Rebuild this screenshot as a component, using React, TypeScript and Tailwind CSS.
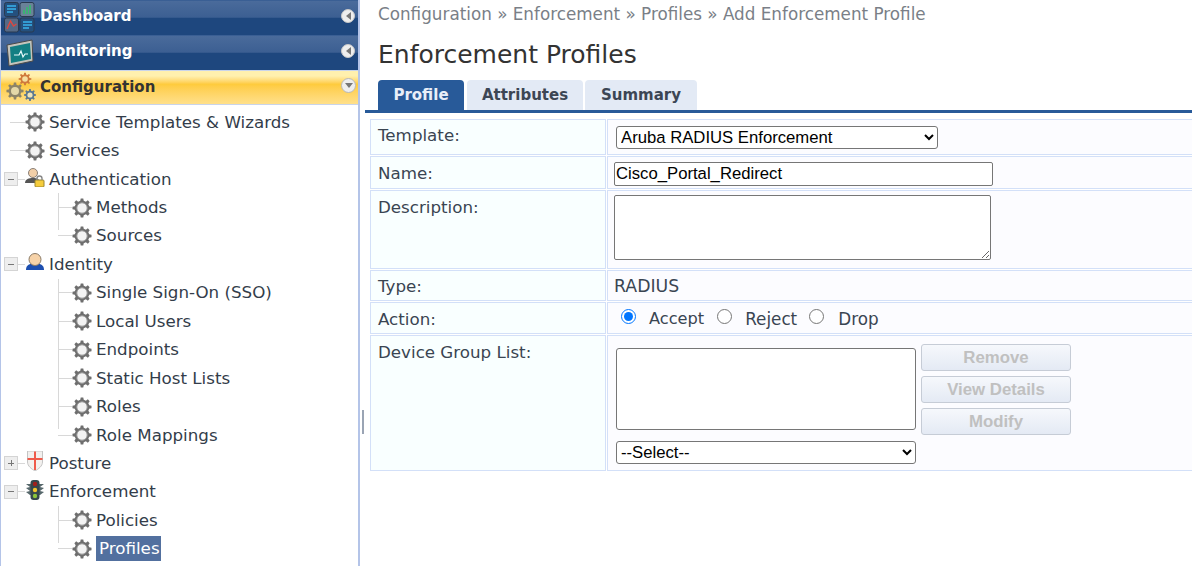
const sans = { fontFamily: '"DejaVu Sans", sans-serif' };

// outline of a toothed wheel, used by all the gear icons
const gearPath = (cx: number, cy: number, inner: number, outer: number, teeth = 8) => {
  const pts: string[] = [];
  for (let i = 0; i < teeth; i++) {
    const step = (Math.PI * 2) / teeth;
    const a = i * step;
    [
      [a - step * 0.3, inner],
      [a - step * 0.17, outer],
      [a + step * 0.17, outer],
      [a + step * 0.3, inner],
    ].forEach(([ang, r]) => {
      pts.push(`${(cx + Math.cos(ang) * r).toFixed(2)} ${(cy + Math.sin(ang) * r).toFixed(2)}`);
    });
  }
  return `M${pts.join("L")}Z`;
};

const Gear = () => (
  <svg width="20" height="20" viewBox="0 0 20 20" className="shrink-0">
    <path fill="#6e6e6e" d={gearPath(10, 10, 7.4, 9.6)} />
    <circle cx="10" cy="10" r="5.2" fill="#f3f3f3" stroke="#9c9c9c" strokeWidth="1" />
  </svg>
);

const Toggle = ({ plus }: { plus?: boolean }) => (
  <span className="relative flex h-[14px] w-[14px] shrink-0 items-center justify-center border border-[#d4d4d4] bg-[#eeeeee]">
    <span className="h-px w-[6px] bg-[#777777]" />
    {plus && <span className="absolute h-[6px] w-px bg-[#777777]" />}
  </span>
);

const AuthIcon = () => (
  <svg width="20" height="20" viewBox="0 0 20 20" className="shrink-0 -translate-y-[2px]">
    <circle cx="8" cy="6" r="4.500" fill="#f2cfa8" stroke="#8a8078" />
    <path d="M0 16c0-4 4-5 8-5s7 1 7 5z" fill="#555555" />
    <rect x="10" y="13" width="9" height="7" rx="1" fill="#f5cc3c" stroke="#9a8530" />
    <path d="M12 13v-1.500a2.500 2.500 0 0 1 5 0V13" fill="none" stroke="#888888" strokeWidth="1.400" />
  </svg>
);

const IdentityIcon = () => (
  <svg width="20" height="20" viewBox="0 0 20 20" className="shrink-0 -translate-y-[2px]">
    <path d="M1 18c0-4 2-5 4-6h10c2 1 4 2 4 6z" fill="#1d4fb0" />
    <circle cx="10" cy="7.500" r="6" fill="#f6d2a8" stroke="#8a7a66" />
  </svg>
);

const ShieldIcon = () => (
  <svg width="20" height="20" viewBox="0 0 20 20" className="shrink-0 -translate-y-[2px]">
    <path d="M2.500 0h15v11c0 4-4 7-7.500 9-3.500-2-7.500-5-7.500-9z" fill="#f2f0ee" stroke="#c4c4c4" />
    <path d="M9 .5h2V7h6.500v2H11v10H9V9H2.500V7H9z" fill="#ef5a4a" />
  </svg>
);

const LightIcon = () => (
  <svg width="20" height="20" viewBox="0 0 20 20" className="shrink-0 -translate-y-[2px]">
    <path d="M1 4h18l-4 3 4 1-4 3 4 1-4 3H5l-4-3 4-1-4-3 4-1z" fill="#56676b" />
    <rect x="5.500" y="0" width="9" height="20" rx="3" fill="#36474c" />
    <circle cx="10" cy="4" r="2.200" fill="#a3201c" />
    <circle cx="10" cy="10" r="2.200" fill="#f3c42c" />
    <circle cx="10" cy="16" r="2.200" fill="#8cc43c" />
  </svg>
);

const DashIcon = () => (
  <svg width="31" height="31" viewBox="0 0 31 31" className="absolute left-[3px] top-[1px]">
    <rect x=".5" y=".5" width="14" height="14" rx="2" fill="#24507e" stroke="#2a3a50" />
    <rect x="16" y=".5" width="14" height="14" rx="2" fill="#6a8298" stroke="#2a3a50" />
    <rect x=".5" y="16" width="14" height="14" rx="2" fill="#566a86" stroke="#2a3a50" />
    <rect x="16" y="16" width="14" height="14" rx="2" fill="#24507e" stroke="#2a3a50" />
    <path d="M3 4h9M3 7h9M3 10h6" stroke="#39b4ee" strokeWidth="1.500" />
    <path d="M20 12V8M23 12V5M26 12V3" stroke="#2fc06a" strokeWidth="1.500" />
    <path d="M3 27l3.500-8 3 5 3-2" stroke="#e2453c" strokeWidth="1.300" fill="none" />
    <path d="M19 20h9M19 23h9M19 26h6" stroke="#39b4ee" strokeWidth="1.500" />
  </svg>
);

const MonitorIcon = () => (
  <svg width="28" height="28" viewBox="0 0 28 28" className="absolute left-[5px] top-[3px]">
    <path d="M1 6l25-5 1 21L3 27z" fill="#c4c4bc" stroke="#4a4a4a" />
    <path d="M4 8l20-4 1 16L5 24z" fill="#127f83" />
    <path d="M8 16h5l2-4 2 6 2-3h3" stroke="#e8fbfb" strokeWidth="1.200" fill="none" />
  </svg>
);

const ConfigIcon = () => (
  <svg width="32" height="32" viewBox="0 0 32 32" className="absolute left-[3px] top-[1px]">
    <path fill="#d07a3c" d={gearPath(21, 7, 4.6, 6.4)} />
    <circle cx="21" cy="7" r="2.800" fill="#f6dfa0" />
    <path fill="#8c8468" d={gearPath(11, 19, 6.4, 8.6)} />
    <circle cx="11" cy="19" r="4" fill="#e4d8a8" />
    <path fill="#5c7890" d={gearPath(26, 23, 4.4, 6)} />
    <circle cx="26" cy="23" r="2.600" fill="#f0e4b8" />
  </svg>
);

const Arrow = ({ down }: { down?: boolean }) => (
  <span
    className={
      down
        ? "absolute right-[2px] top-[7px] flex h-[15px] w-[15px] items-center justify-center rounded-full border border-[#b8b8b8] bg-[#eeeeee]"
        : "absolute right-[3px] top-[8px] flex h-[14px] w-[14px] items-center justify-center rounded-full border border-[#c8c8c8] bg-[#eeeeee]"
    }
  >
    {down ? (
      <span className="h-0 w-0 border-x-[4px] border-t-[5px] border-x-transparent border-t-[#777777]" />
    ) : (
      <span className="h-0 w-0 border-y-[4px] border-r-[5px] border-y-transparent border-r-[#777777]" />
    )}
  </span>
);

const NavHeader = ({ label, icon, active }: { label: string; icon: React.ReactNode; active?: boolean }) => (
  <div
    className={
      active
        ? "relative flex h-[35px] items-center border-y border-[#c9d4ea] bg-gradient-to-b from-[#fff0ae] from-[15%] via-[#fecb3c] via-[40%] to-[#ffe08a] pl-[39px] text-[15px] font-bold text-[#333333]"
        : "relative flex h-[35px] items-center border-t border-[#3a5f94] bg-[linear-gradient(#4a6b9b_0%,#3c5f92_48%,#1e477e_50%,#1e477e_100%)] pb-[4px] pl-[39px] text-[15px] font-bold text-white"
    }
  >
    {icon}
    {label}
    <Arrow down={active} />
  </div>
);

const TreeRow = ({
  label,
  icon,
  toggle,
  child,
  last,
  selected,
}: {
  label: string;
  icon?: React.ReactNode;
  toggle?: "plus" | "minus";
  child?: boolean;
  last?: boolean;
  selected?: boolean;
}) => (
  <div className="relative flex h-[28.44px] items-center">
    {child && (
      <span className={last ? "absolute left-[57px] top-0 h-[8px] w-px bg-[#d8d8d8]" : "absolute left-[57px] top-0 h-full w-px bg-[#d8d8d8]"} />
    )}
    <div className={child ? "flex w-[95px] shrink-0 items-center pl-[57px]" : "flex w-[48px] shrink-0 items-center pl-[3px]"}>
      {toggle ? <Toggle plus={toggle === "plus"} /> : !child && <span className="w-[6px]" />}
      <span className={child ? "h-px w-[14px] bg-[#d8d8d8]" : toggle ? "h-px w-[7px] bg-[#d8d8d8]" : "h-px w-[15px] bg-[#d8d8d8]"} />
      {icon ?? <Gear />}
    </div>
    <span className={selected ? "bg-[#52709f] pl-[3px] pr-px leading-[25px] text-white" : ""}>{label}</span>
  </div>
);

const FormRow = ({ label, h, top = 4, children }: { label: string; h: number; top?: number; children: React.ReactNode }) => (
  <div className="flex gap-px" style={{ height: h }}>
    <div className="w-[236px] shrink-0 border border-[#d3e0f8] bg-[#f9ffff] pl-[7px] text-[#3a4552]" style={{ paddingTop: top }}>
      {label}
    </div>
    <div className="min-w-0 flex-1 border-y border-l border-[#d3e0f8] bg-[#fcfcff] pl-[6px] text-[#3a4552]">{children}</div>
  </div>
);

const DisabledButton = ({ label }: { label: string }) => (
  <button
    disabled
    className="h-[27px] w-[150px] rounded-[3px] border border-[#c6ccd6] bg-gradient-to-b from-[#f6f8fc] to-[#e4eaf4] text-[16.8px] font-bold text-[#c0c0c0]"
    style={{ fontFamily: '"Liberation Sans", sans-serif' }}
  >
    {label}
  </button>
);

const tree = [
  { label: "Service Templates & Wizards" },
  { label: "Services" },
  { label: "Authentication", toggle: "minus", icon: <AuthIcon /> },
  { label: "Methods", child: true },
  { label: "Sources", child: true, last: true },
  { label: "Identity", toggle: "minus", icon: <IdentityIcon /> },
  { label: "Single Sign-On (SSO)", child: true },
  { label: "Local Users", child: true },
  { label: "Endpoints", child: true },
  { label: "Static Host Lists", child: true },
  { label: "Roles", child: true },
  { label: "Role Mappings", child: true, last: true },
  { label: "Posture", toggle: "plus", icon: <ShieldIcon /> },
  { label: "Enforcement", toggle: "minus", icon: <LightIcon /> },
  { label: "Policies", child: true },
  { label: "Profiles", child: true, last: true, selected: true },
] as const;

export default function App() {
  const field = { fontFamily: '"Liberation Sans", sans-serif' };
  return (
    <div className="flex h-[566px] w-[1192px] overflow-hidden bg-white text-[16.7px] text-[#333d4a]" style={sans}>
      <aside className="w-[360px] shrink-0 overflow-hidden border-x-2 border-l-[1px] border-l-[#b4c4e8] border-r-[#b4c4e8]">
        <NavHeader label="Dashboard" icon={<DashIcon />} />
        <NavHeader label="Monitoring" icon={<MonitorIcon />} />
        <NavHeader label="Configuration" icon={<ConfigIcon />} active />
        <div className="pt-[3px]">
          {tree.map((t) => (
            <TreeRow key={t.label} {...t} />
          ))}
        </div>
      </aside>
      <div className="flex w-[5px] shrink-0 items-center justify-start pt-[277px]">
        <span className="ml-[2px] h-[24px] w-[2px] bg-[#9aa4b4]" />
      </div>
      <main className="min-w-0 flex-1">
        <div className="pl-[13px] pt-[4px] text-[16.8px] leading-[21px] text-[#7a7f87]">
          Configuration » Enforcement » Profiles » Add Enforcement Profile
        </div>
        <h1 className="pl-[13px] pt-[15px] text-[25px] leading-[30px] text-[#333333]">Enforcement Profiles</h1>
        <div className="mt-[10px] flex gap-[2px] border-b-[3px] border-[#285a99] pl-[13px]">
          <div className="mr-px flex h-[30px] w-[86px] items-center justify-center rounded-t-[4px] bg-[#285a99] pt-px text-[15px] font-bold text-[#e8eef8]">
            Profile
          </div>
          <div className="flex h-[30px] w-[116px] items-center justify-center rounded-t-[4px] bg-[#e3eaf5] pt-px text-[15px] font-bold text-[#3c4654]">
            Attributes
          </div>
          <div className="flex h-[30px] w-[112px] items-center justify-center rounded-t-[4px] bg-[#e3eaf5] pt-px text-[15px] font-bold text-[#3c4654]">
            Summary
          </div>
        </div>
        <div className="ml-[5px] mt-[6px] flex flex-col gap-px">
          <FormRow label="Template:" h={36} top={3}>
            <select className="ml-[2px] mt-[6px] h-[23px] w-[322px] rounded-[3px] border border-[#767676] bg-white text-[16.7px] text-black" style={field}>
              <option>Aruba RADIUS Enforcement</option>
            </select>
          </FormRow>
          <FormRow label="Name:" h={33}>
            <input
              readOnly
              value="Cisco_Portal_Redirect"
              className="mt-[5px] h-[24px] w-[379px] rounded-[2px] border border-[#767676] bg-white px-[1px] text-[16.7px] text-black"
              style={field}
            />
          </FormRow>
          <FormRow label="Description:" h={79}>
            <textarea readOnly className="mt-[4px] block h-[65px] w-[377px] rounded-[2px] border border-[#767676] bg-white" />
          </FormRow>
          <FormRow label="Type:" h={31} top={3}>
            <div className="pt-[3px] text-[17.3px]">RADIUS</div>
          </FormRow>
          <FormRow label="Action:" h={32}>
            <div className="flex items-center pt-[4px] text-[16.2px]">
              <input type="radio" name="action" defaultChecked className="m-0 mb-[7px] ml-[7px] h-[15px] w-[15px]" />
              <span className="ml-[13px]">Accept</span>
              <input type="radio" name="action" className="m-0 mb-[7px] ml-[13px] h-[15px] w-[15px]" />
              <span className="ml-[13px] text-[16.8px]">Reject</span>
              <input type="radio" name="action" className="m-0 mb-[7px] ml-[12px] h-[15px] w-[15px]" />
              <span className="ml-[14px] text-[16.8px]">Drop</span>
            </div>
          </FormRow>
          <FormRow label="Device Group List:" h={136}>
            <div className="ml-[2px] flex items-start gap-[5px] pt-[8px]">
              <div className="pt-[4px]">
                <div className="h-[82px] w-[300px] rounded-[3px] border border-[#767676] bg-white" />
                <select className="mt-[11px] block h-[23px] w-[300px] rounded-[3px] border border-[#767676] bg-white text-[16.7px] text-black" style={field}>
                  <option>--Select--</option>
                </select>
              </div>
              <div className="flex flex-col gap-[5px]">
                <DisabledButton label="Remove" />
                <DisabledButton label="View Details" />
                <DisabledButton label="Modify" />
              </div>
            </div>
          </FormRow>
        </div>
      </main>
    </div>
  );
}
